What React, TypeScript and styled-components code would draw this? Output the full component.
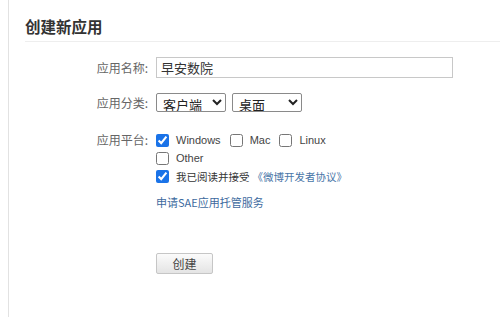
import React from "react";
import styled, { createGlobalStyle } from "styled-components";

const Global = createGlobalStyle`
  html, body { margin: 0; padding: 0; background: #fff; }
  body { font-family: "Liberation Sans", "Noto Sans CJK SC", Arial, sans-serif; color: #333; }
`;

const Page = styled.div`
  margin-left: 8px;
  border-left: 1px solid #e2e2e2;
  min-height: 317px;
  padding-left: 16px;
  box-sizing: border-box;
`;

const Header = styled.div`
  padding-top: 18px;
  padding-bottom: 7px;
  border-bottom: 1px solid #eeeeee;
`;

const Title = styled.h2`
  margin: 0;
  font-size: 15.5px;
  line-height: 16px;
  font-weight: bold;
  color: #333;
  font-family: "Noto Sans CJK SC", sans-serif;
`;

const Form = styled.div`
  padding-top: 15px;
  display: flex;
  flex-direction: column;
`;

const Row = styled.div<{ $mt?: number }>`
  display: flex;
  align-items: flex-start;
  margin-top: ${(p) => p.$mt ?? 0}px;
`;

const Label = styled.div<{ $h: number }>`
  width: 123px;
  text-align: right;
  padding-right: 8px;
  font-size: 12px;
  color: #666;
  line-height: ${(p) => p.$h}px;
  font-family: "Noto Sans CJK SC", sans-serif;
  flex: none;
`;

const Field = styled.div`
  display: flex;
  flex-direction: column;
`;

const TextInput = styled.input`
  width: 297px;
  height: 21px;
  box-sizing: border-box;
  border: 1px solid #c8c8c8;
  padding: 0 4px;
  font-size: 13px;
  color: #333;
  font-family: "Noto Sans CJK SC", sans-serif;
  outline: none;
`;

const SelectGroup = styled.div`
  display: flex;
  gap: 6px;
`;

const Select = styled.select`
  width: 70px;
  height: 19px;
  box-sizing: border-box;
  border: 1px solid #8a8a8a;
  border-radius: 2px;
  font-size: 13px;
  padding: 0 0 0 2px;
  color: #222;
  font-family: "Noto Sans CJK SC", sans-serif;
  background: #fff;
`;

const Line = styled.label`
  display: flex;
  align-items: center;
  height: 18px;
  font-size: 11px;
  color: #444;
`;

const Option = styled.span`
  display: inline-flex;
  align-items: center;
  margin-right: 9px;
`;

const Check = styled.input.attrs({ type: "checkbox" })`
  width: 13px;
  height: 13px;
  margin: 0 7px 0 0;
  accent-color: #1a73e8;
`;

const CnText = styled.span`
  font-family: "Noto Sans CJK SC", sans-serif;
  font-size: 10.5px;
  color: #333;
`;

const Link = styled.a`
  font-family: "Noto Sans CJK SC", sans-serif;
  font-size: 10.5px;
  color: #4a76a8;
  text-decoration: none;
  margin-left: 3px;
`;

const SaeLink = styled.a`
  font-family: "Noto Sans CJK SC", sans-serif;
  font-size: 11px;
  color: #3d6a9e;
  text-decoration: none;
  line-height: 18px;
  margin-top: 8px;
`;

const Button = styled.button`
  width: 57px;
  height: 21px;
  margin-top: 42px;
  border: 1px solid #c6c6c6;
  border-radius: 2px;
  background: linear-gradient(#fbfbfb, #e4e4e4);
  font-family: "Noto Sans CJK SC", sans-serif;
  font-size: 12px;
  color: #444;
  padding: 0;
`;

export default function App() {
  return (
    <>
      <Global />
      <Page>
        <Header>
          <Title>创建新应用</Title>
        </Header>
        <Form>
          <Row>
            <Label $h={21}>应用名称:</Label>
            <TextInput defaultValue="早安数院" />
          </Row>
          <Row $mt={15}>
            <Label $h={19}>应用分类:</Label>
            <SelectGroup>
              <Select defaultValue="客户端">
                <option>客户端</option>
              </Select>
              <Select defaultValue="桌面">
                <option>桌面</option>
              </Select>
            </SelectGroup>
          </Row>
          <Row $mt={19}>
            <Label $h={18}>应用平台:</Label>
            <Field>
              <Line>
                <Option>
                  <Check defaultChecked />
                  Windows
                </Option>
                <Option>
                  <Check />
                  Mac
                </Option>
                <Option>
                  <Check />
                  Linux
                </Option>
              </Line>
              <Line>
                <Option>
                  <Check />
                  Other
                </Option>
              </Line>
              <Line>
                <Check defaultChecked />
                <CnText>我已阅读并接受</CnText>
                <Link href="#">《微博开发者协议》</Link>
              </Line>
              <SaeLink href="#">申请SAE应用托管服务</SaeLink>
              <div>
                <Button>创建</Button>
              </div>
            </Field>
          </Row>
        </Form>
      </Page>
    </>
  );
}
